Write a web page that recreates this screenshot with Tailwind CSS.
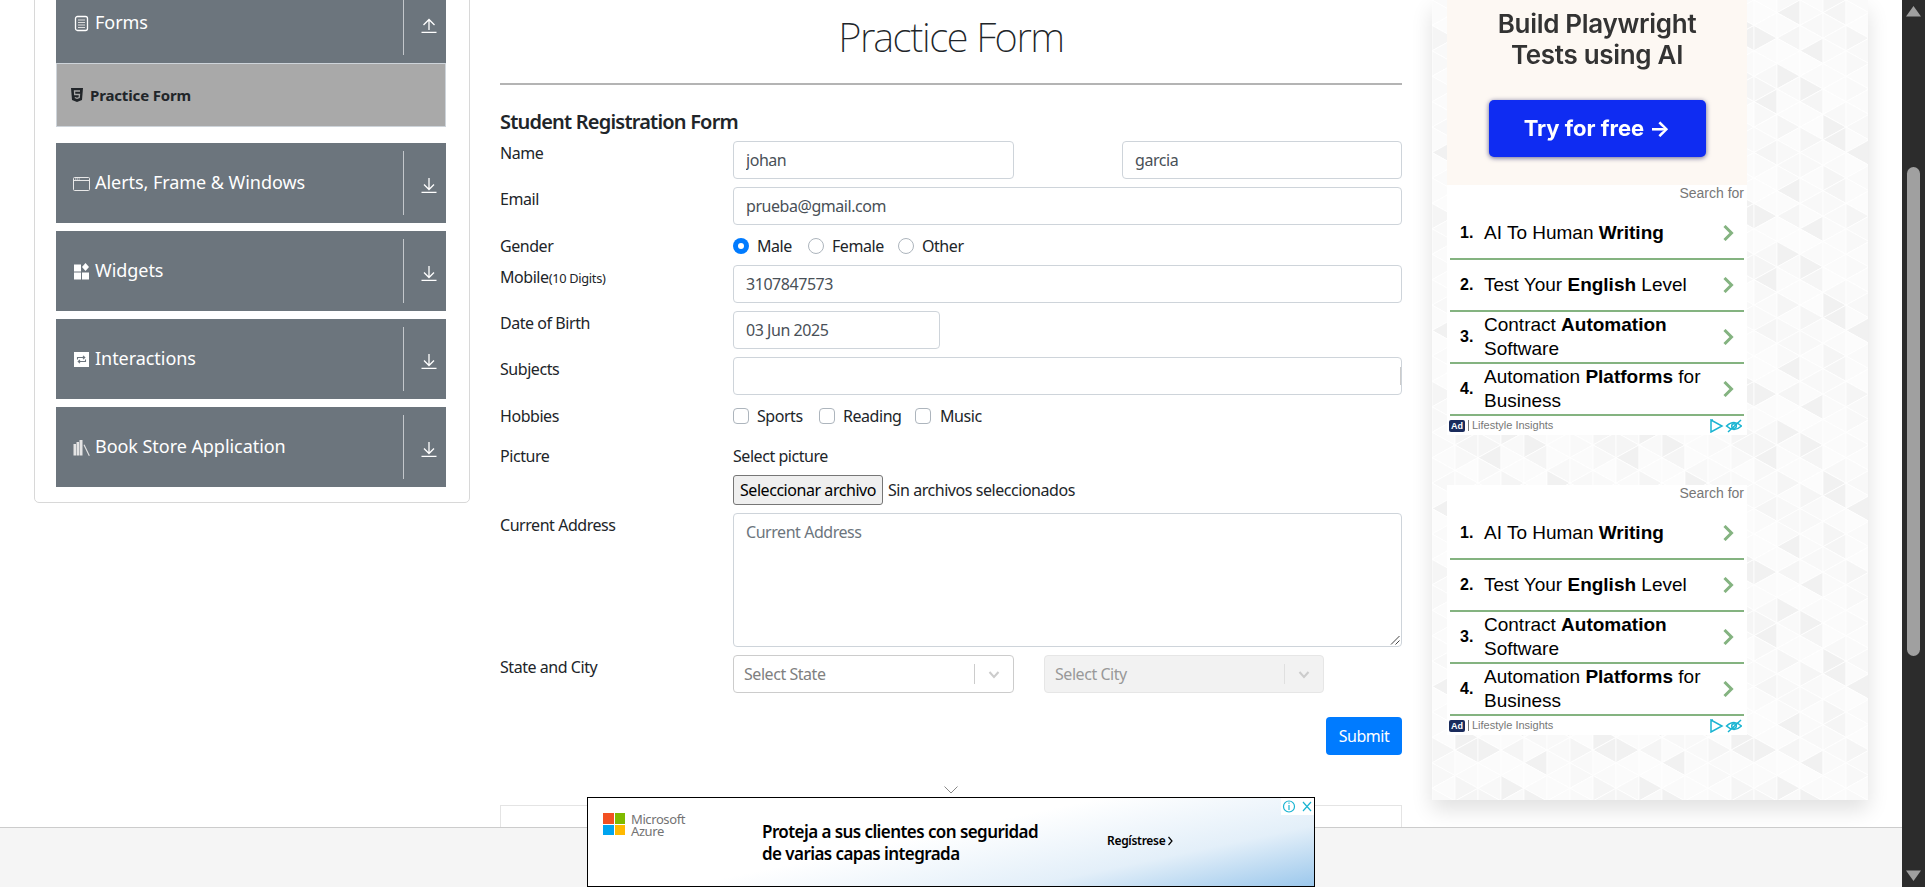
<!DOCTYPE html>
<html lang="en">
  <head>
    <meta charset="UTF-8" />
    <title>Practice Form</title>
    <script src="https://cdn.jsdelivr.net/npm/@tailwindcss/browser@4"></script>
  </head>
  <body class="bg-white">
    <div class="flex h-[887px] w-[1925px] overflow-hidden font-['Noto_Sans','Open_Sans',sans-serif] text-[16px] text-[#212529]">
      <div class="relative h-full w-[1902px] overflow-hidden">
        <div class="flex gap-[30px] pl-[34px]">
          <!-- sidebar -->
          <aside class="-mt-[30px] flex h-[533px] w-[436px] flex-col gap-2 rounded-[5px] border border-[#d8d8d8] pl-[21px] pr-[23px] pt-[12px]">
            <div class="-mb-2">
              <div class="flex h-20 items-center bg-[#6c757d] text-[18px] tracking-[-0.05px] text-white">
                <svg class="ml-[17px] mr-[5px] h-[17px] w-[17px]" viewBox="0 0 17 17" fill="none" stroke="#fff"><rect x="2.5" y="1.5" width="12" height="14" rx="2" stroke-width="1.3"/><path d="M5 5h7M5 7.5h7M5 10h7M5 12.5h7" stroke="#ddd"/></svg>
                <span class="flex-1 -translate-y-[1px]">Forms</span>
                <div class="flex h-16 w-[43px] items-center justify-center border-l border-[#c3c7cb]">
                  <svg class="ml-2 mt-1 h-4 w-4" viewBox="0 0 16 16" fill="none" stroke="#fff" stroke-width="1.3"><path d="M8 3v10M2.5 8 8 2.5 13.5 8M.5 15.3h15"/></svg>
                </div>
              </div>
              <div class="flex h-16 items-center border border-[#ced4da] bg-[#a9a9a9] pl-[14px] text-[15px] font-bold tracking-[-0.15px]">
                <svg class="mr-[7px] h-[14px] w-[12px]" viewBox="0 0 12 14"><path fill="#212529" d="M0 0h12l-1 12-5 2-5-2z"/><path fill="none" stroke="#a9a9a9" stroke-width="1.3" d="M9 3H3.5l.2 3.5H8.5l-.3 3L6 10.300l-2.200-.8"/></svg>
                <span>Practice Form</span>
              </div>
            </div>
            <div class="mt-4 flex h-20 items-center bg-[#6c757d] text-[18px] tracking-[-0.05px] text-white">
              <svg class="ml-[17px] mr-[5px] h-[17px] w-[17px]" viewBox="0 0 17 17" fill="none" stroke="#e8e8e8"><rect x=".5" y="2.500" width="16" height="13" rx="1"/><path d="M.5 5.500h16" /><path d="M2 4h5" stroke-width="1.200" stroke-dasharray="1.200 .6"/></svg>
              <span class="flex-1 -translate-y-[1px]">Alerts, Frame &amp; Windows</span>
              <div class="flex h-16 w-[43px] items-center justify-center border-l border-[#c3c7cb]">
                <svg class="ml-2 mt-1 h-4 w-4" viewBox="0 0 16 16" fill="none" stroke="#fff" stroke-width="1.3"><path d="M8 1v11M3 7.500 8 12.500 13 7.500M.5 15.300h15"/></svg>
              </div>
            </div>
            <div class="flex h-20 items-center bg-[#6c757d] text-[18px] tracking-[-0.05px] text-white">
              <svg class="ml-[17px] mr-[5px] h-[17px] w-[17px]" viewBox="0 0 17 17" fill="#fff"><rect x="1" y="1.500" width="7" height="7"/><rect x="1" y="9.500" width="7" height="7"/><rect x="9" y="9.500" width="7" height="7"/><path d="M12.500 0 16 4l-3.500 4L9 4z"/></svg>
              <span class="flex-1 -translate-y-[1px]">Widgets</span>
              <div class="flex h-16 w-[43px] items-center justify-center border-l border-[#c3c7cb]">
                <svg class="ml-2 mt-1 h-4 w-4" viewBox="0 0 16 16" fill="none" stroke="#fff" stroke-width="1.3"><path d="M8 1v11M3 7.500 8 12.500 13 7.500M.5 15.300h15"/></svg>
              </div>
            </div>
            <div class="flex h-20 items-center bg-[#6c757d] text-[18px] tracking-[-0.05px] text-white">
              <svg class="ml-[17px] mr-[5px] h-[17px] w-[17px]" viewBox="0 0 17 17"><rect x="1" y="1" width="15" height="15" fill="#fff"/><path fill="none" stroke="#6c757d" stroke-width="1.100" d="M4.500 8.500V6.500h7M10 4.800l1.800 1.700L10 8.200M12.500 8.500v2h-7M7 8.800l-1.800 1.700L7 12.200"/></svg>
              <span class="flex-1 -translate-y-[1px]">Interactions</span>
              <div class="flex h-16 w-[43px] items-center justify-center border-l border-[#c3c7cb]">
                <svg class="ml-2 mt-1 h-4 w-4" viewBox="0 0 16 16" fill="none" stroke="#fff" stroke-width="1.3"><path d="M8 1v11M3 7.500 8 12.500 13 7.500M.5 15.300h15"/></svg>
              </div>
            </div>
            <div class="flex h-20 items-center bg-[#6c757d] text-[18px] tracking-[-0.05px] text-white">
              <svg class="ml-[17px] mr-[5px] h-[17px] w-[17px]" viewBox="0 0 17 17" fill="#e4e4e4"><rect x=".5" y="5" width="2.500" height="11.500"/><rect x="3.500" y="3" width="2.500" height="13.500"/><rect x="6.500" y="1" width="3" height="15.500"/><path d="M10.500 6 11.500 5.600 16.800 16.500 15.800 17z"/></svg>
              <span class="flex-1 -translate-y-[1px]">Book Store Application</span>
              <div class="flex h-16 w-[43px] items-center justify-center border-l border-[#c3c7cb]">
                <svg class="ml-2 mt-1 h-4 w-4" viewBox="0 0 16 16" fill="none" stroke="#fff" stroke-width="1.3"><path d="M8 1v11M3 7.500 8 12.500 13 7.500M.5 15.300h15"/></svg>
              </div>
            </div>
          </aside>

          <!-- form -->
          <main class="w-[902px]">
            <h1 class="pt-[13px] text-center text-[40px] leading-[48px] font-extralight tracking-[-1.4px]">Practice Form</h1>
            <div class="mt-[22px] h-[2px] bg-[#b4b4b4]"></div>
            <h5 class="mt-[23px] text-[20px] leading-[28px] font-semibold tracking-[-0.8px]">Student Registration Form</h5>
            <form class="mt-[5px] tracking-[-0.45px]">
              <div class="flex">
                <label class="w-[233px] leading-6">Name</label>
                <div class="flex flex-1 justify-between">
                  <input class="h-[38px] w-[281px] rounded border border-[#ced4da] px-3 text-[#495057]" value="johan" />
                  <input class="h-[38px] w-[280px] rounded border border-[#ced4da] px-3 text-[#495057]" value="garcia" />
                </div>
              </div>
              <div class="mt-2 flex">
                <label class="w-[233px] leading-6">Email</label>
                <input class="h-[38px] flex-1 rounded border border-[#ced4da] px-3 text-[#495057]" value="prueba@gmail.com" />
              </div>
              <div class="mt-[9px] flex items-center leading-6">
                <label class="w-[233px]">Gender</label>
                <span class="box-border flex h-4 w-4 items-center justify-center rounded-full bg-[#007bff]"><span class="h-[6px] w-[6px] rounded-full bg-white"></span></span>
                <span class="ml-2 w-[51px]">Male</span>
                <span class="h-4 w-4 rounded-full border border-[#adb5bd]"></span>
                <span class="ml-2 w-[66px]">Female</span>
                <span class="h-4 w-4 rounded-full border border-[#adb5bd]"></span>
                <span class="ml-2">Other</span>
              </div>
              <div class="mt-[7px] flex">
                <label class="w-[233px] leading-6">Mobile<small class="text-[12.800px] tracking-[-0.3px]">(10 Digits)</small></label>
                <input class="h-[38px] flex-1 rounded border border-[#ced4da] px-3 text-[#495057]" value="3107847573" />
              </div>
              <div class="mt-2 flex">
                <label class="w-[233px] leading-6">Date of Birth</label>
                <input class="h-[38px] w-[207px] rounded border border-[#ced4da] px-3 text-[#495057]" value="03 Jun 2025" />
              </div>
              <div class="mt-2 flex">
                <label class="w-[233px] leading-6">Subjects</label>
                <div class="flex h-[38px] flex-1 items-center justify-end rounded border border-[#ced4da]"><span class="h-[18px] w-px bg-[#ccc]"></span></div>
              </div>
              <div class="mt-[9px] flex items-center leading-6">
                <label class="w-[233px]">Hobbies</label>
                <span class="h-4 w-4 rounded border border-[#adb5bd]"></span>
                <span class="ml-2 w-[62px]">Sports</span>
                <span class="h-4 w-4 rounded border border-[#adb5bd]"></span>
                <span class="ml-2 w-[72px]">Reading</span>
                <span class="h-4 w-4 rounded border border-[#adb5bd]"></span>
                <span class="ml-[9px]">Music</span>
              </div>
              <div class="mt-4 flex">
                <label class="w-[233px] leading-6">Picture</label>
                <div>
                  <div class="leading-6">Select picture</div>
                  <div class="mt-[7px] flex h-[30px] items-center">
                    <button type="button" class="h-[30px] w-[150px] rounded-[3px] border border-[#767676] bg-[#efefef] text-black">Seleccionar archivo</button>
                    <span class="ml-[5px]">Sin archivos seleccionados</span>
                  </div>
                </div>
              </div>
              <div class="mt-2 flex">
                <label class="w-[233px] leading-6">Current Address</label>
                <div class="relative flex-1">
                  <textarea class="block h-[134px] w-full resize-none rounded border border-[#ced4da] px-3 py-[6px] placeholder:text-[#6c757d]" placeholder="Current Address"></textarea>
                  <svg class="absolute bottom-[2px] right-[2px] h-[10px] w-[10px]" viewBox="0 0 10 10" fill="none" stroke="#444"><path d="M1 9.500 9.500 1M5.500 9.500 9.500 5.500"/></svg>
                </div>
              </div>
              <div class="mt-2 flex">
                <label class="w-[233px] leading-6">State and City</label>
                <div class="flex h-[38px] w-[281px] items-center rounded border border-[#ccc] pl-[10px] text-[#808080]">
                  <span class="flex-1">Select State</span>
                  <span class="h-5 w-px bg-[#ccc]"></span>
                  <svg class="mx-[10px] h-[18px] w-[18px]" viewBox="0 0 18 18" fill="none" stroke="#ccc" stroke-width="2"><path d="m4.500 7 4.500 5 4.500-5"/></svg>
                </div>
                <div class="ml-[30px] flex h-[38px] w-[280px] items-center rounded border border-[#e6e6e6] bg-[#f2f2f2] pl-[10px] text-[#999]">
                  <span class="flex-1">Select City</span>
                  <span class="h-5 w-px bg-[#e0e0e0]"></span>
                  <svg class="mx-[10px] h-[18px] w-[18px]" viewBox="0 0 18 18" fill="none" stroke="#ccc" stroke-width="2"><path d="m4.500 7 4.500 5 4.500-5"/></svg>
                </div>
              </div>
              <div class="mt-6 flex justify-end">
                <button type="button" class="h-[38px] w-[76px] rounded bg-[#007bff] text-white">Submit</button>
              </div>
            </form>
            <div class="mt-[31px] flex justify-center">
              <svg class="h-[8px] w-[14px]" viewBox="0 0 14 8" fill="none" stroke="#888"><path d="m.5.500 6.500 6.500 6.500-6.500"/></svg>
            </div>
            <div class="mt-[11px] h-[60px] border border-[#e4e4e4]"></div>
          </main>

          <!-- right ad column -->
          <section class="relative h-[800px] w-[436px] overflow-hidden bg-[#fafafa] shadow-[0_10px_20px_rgba(0,0,0,0.12)]">
            <svg id="pattern" class="absolute inset-0" width="436" height="800"></svg>
            <div class="relative ml-[15px] w-[300px] font-['Liberation_Sans',Arial,sans-serif]">
              <div class="flex h-[185px] flex-col items-center bg-[#fdf8f3] text-[#333] font-['Inter',sans-serif]">
                <p class="pt-[8px] text-center text-[26px] leading-[31px] font-semibold tracking-[-0.3px] blur-[0.5px]">Build Playwright<br />Tests using AI</p>
                <div class="mt-[30px] flex h-[57px] w-[217px] items-center justify-center rounded-[5px] bg-[#0f2cf2] text-[22px] font-bold text-white shadow-[0_1px_5px_rgba(0,0,80,0.6)] blur-[0.5px]">Try for free →</div>
              </div>
              <div class="bg-white">
                <div class="h-[23px] pr-[3px] text-right text-[14px] leading-[17px] text-[#777]">Search for</div>
                <div class="mx-[3px] flex h-[52px] items-center border-b-2 border-[#84b380] pl-[10px] pr-[10px] text-[19px] leading-6 text-black"><b class="w-[24px] shrink-0 text-[16px]">1.</b><span class="flex-1">AI To Human <b>Writing</b></span><svg class="h-[16px] w-[11px]" viewBox="0 0 11 16" fill="none" stroke="#84b380" stroke-width="3"><path d="m1.500 1 7 7-7 7"/></svg></div>
                <div class="mx-[3px] flex h-[52px] items-center border-b-2 border-[#84b380] pl-[10px] pr-[10px] text-[19px] leading-6 text-black"><b class="w-[24px] shrink-0 text-[16px]">2.</b><span class="flex-1">Test Your <b>English</b> Level</span><svg class="h-[16px] w-[11px]" viewBox="0 0 11 16" fill="none" stroke="#84b380" stroke-width="3"><path d="m1.500 1 7 7-7 7"/></svg></div>
                <div class="mx-[3px] flex h-[52px] items-center border-b-2 border-[#84b380] pl-[10px] pr-[10px] text-[19px] leading-6 text-black"><b class="w-[24px] shrink-0 text-[16px]">3.</b><span class="flex-1">Contract <b>Automation</b><br />Software</span><svg class="h-[16px] w-[11px]" viewBox="0 0 11 16" fill="none" stroke="#84b380" stroke-width="3"><path d="m1.500 1 7 7-7 7"/></svg></div>
                <div class="mx-[3px] flex h-[52px] items-center border-b-2 border-[#84b380] pl-[10px] pr-[10px] text-[19px] leading-6 text-black"><b class="w-[24px] shrink-0 text-[16px]">4.</b><span class="flex-1">Automation <b>Platforms</b> for<br />Business</span><svg class="h-[16px] w-[11px]" viewBox="0 0 11 16" fill="none" stroke="#84b380" stroke-width="3"><path d="m1.500 1 7 7-7 7"/></svg></div>
                <div class="flex h-[19px] items-center pl-[2px] pr-[5px] text-[11px] text-[#777]">
                  <span class="rounded-[2px] bg-[#1a2b5c] px-[2px] text-[9px] leading-[12px] font-bold text-white">Ad</span>
                  <span class="mx-[3px] h-[11px] w-px bg-[#777]"></span>
                  <span class="flex-1">Lifestyle Insights</span>
                  <svg class="h-[14px] w-[32px]" viewBox="0 0 32 14" fill="none" stroke="#19b4d2" stroke-width="1.500"><path d="M1 1v12l11-6zM1 1h2"/><path d="M16.500 7q7.500-7 15 0-7.500 7-15 0zM18 13 31 1"/><circle cx="24" cy="7" r="2.300"/></svg>
                </div>
              </div>
              <div class="mt-[50px] bg-white">
                <div class="h-[23px] pr-[3px] text-right text-[14px] leading-[17px] text-[#777]">Search for</div>
                <div class="mx-[3px] flex h-[52px] items-center border-b-2 border-[#84b380] pl-[10px] pr-[10px] text-[19px] leading-6 text-black"><b class="w-[24px] shrink-0 text-[16px]">1.</b><span class="flex-1">AI To Human <b>Writing</b></span><svg class="h-[16px] w-[11px]" viewBox="0 0 11 16" fill="none" stroke="#84b380" stroke-width="3"><path d="m1.500 1 7 7-7 7"/></svg></div>
                <div class="mx-[3px] flex h-[52px] items-center border-b-2 border-[#84b380] pl-[10px] pr-[10px] text-[19px] leading-6 text-black"><b class="w-[24px] shrink-0 text-[16px]">2.</b><span class="flex-1">Test Your <b>English</b> Level</span><svg class="h-[16px] w-[11px]" viewBox="0 0 11 16" fill="none" stroke="#84b380" stroke-width="3"><path d="m1.500 1 7 7-7 7"/></svg></div>
                <div class="mx-[3px] flex h-[52px] items-center border-b-2 border-[#84b380] pl-[10px] pr-[10px] text-[19px] leading-6 text-black"><b class="w-[24px] shrink-0 text-[16px]">3.</b><span class="flex-1">Contract <b>Automation</b><br />Software</span><svg class="h-[16px] w-[11px]" viewBox="0 0 11 16" fill="none" stroke="#84b380" stroke-width="3"><path d="m1.500 1 7 7-7 7"/></svg></div>
                <div class="mx-[3px] flex h-[52px] items-center border-b-2 border-[#84b380] pl-[10px] pr-[10px] text-[19px] leading-6 text-black"><b class="w-[24px] shrink-0 text-[16px]">4.</b><span class="flex-1">Automation <b>Platforms</b> for<br />Business</span><svg class="h-[16px] w-[11px]" viewBox="0 0 11 16" fill="none" stroke="#84b380" stroke-width="3"><path d="m1.500 1 7 7-7 7"/></svg></div>
                <div class="flex h-[19px] items-center pl-[2px] pr-[5px] text-[11px] text-[#777]">
                  <span class="rounded-[2px] bg-[#1a2b5c] px-[2px] text-[9px] leading-[12px] font-bold text-white">Ad</span>
                  <span class="mx-[3px] h-[11px] w-px bg-[#777]"></span>
                  <span class="flex-1">Lifestyle Insights</span>
                  <svg class="h-[14px] w-[32px]" viewBox="0 0 32 14" fill="none" stroke="#19b4d2" stroke-width="1.500"><path d="M1 1v12l11-6zM1 1h2"/><path d="M16.500 7q7.500-7 15 0-7.500 7-15 0zM18 13 31 1"/><circle cx="24" cy="7" r="2.300"/></svg>
                </div>
              </div>
            </div>
          </section>
        </div>

        <!-- sticky footer bar and anchor ad -->
        <footer class="absolute bottom-0 left-0 h-[60px] w-full border-t border-[#ccc] bg-[#f5f5f5]"></footer>
        <div class="absolute bottom-0 left-[587px] h-[90px] w-[728px] border border-black bg-[linear-gradient(168deg,#ffffff_45%,#e3eff9_75%,#9cc8ec_100%)]">
          <div class="absolute left-[15px] top-[15px] grid h-[22px] w-[22px] grid-cols-2 gap-[1px]">
            <span class="bg-[#f25022]"></span><span class="bg-[#7fba00]"></span><span class="bg-[#00a4ef]"></span><span class="bg-[#ffb900]"></span>
          </div>
          <div class="absolute left-[43px] top-[15px] text-[13px] leading-[12px] tracking-[-0.4px] text-[#737373]">Microsoft<br />Azure</div>
          <div class="absolute left-[174px] top-[23px] text-[17px] leading-[22px] font-semibold tracking-[-0.57px] text-black">Proteja a sus clientes con seguridad<br />de varias capas integrada</div>
          <div class="absolute left-[519px] top-[34px] flex items-center gap-[3px] text-[12px] font-semibold tracking-[-0.3px] text-black">Regístrese<svg class="h-[10px] w-[5px]" viewBox="0 0 5 10" fill="none" stroke="#000" stroke-width="1.200"><path d="m.5 1 3.500 4-3.500 4"/></svg></div>
          <svg class="absolute right-0 top-0 h-[17px] w-[33px] bg-white" viewBox="0 0 33 17" fill="none" stroke="#19b4d2" stroke-width="1.200"><circle cx="8" cy="8.500" r="5.500"/><path d="M8 7v5M8 4.500v1.300M22 4l8 9M30 4l-8 9"/></svg>
        </div>
      </div>

      <!-- browser scrollbar -->
      <div class="relative h-full w-[23px] bg-[#2c2c2c]">
        <svg class="absolute left-[4px] top-[6px] h-[11px] w-[15px]" viewBox="0 0 15 11"><path fill="#a0a0a0" d="M7.500 0 15 10.500H0z"/></svg>
        <div class="absolute left-[5px] top-[167px] h-[489px] w-[13px] rounded-full bg-[#a0a0a0]"></div>
        <svg class="absolute bottom-[6px] left-[4px] h-[11px] w-[15px]" viewBox="0 0 15 11"><path fill="#a0a0a0" d="M0 .500h15L7.500 11z"/></svg>
      </div>
    </div>
    <script>
      // triangle wallpaper behind the ads, repeats every 6 columns and 7 rows
      const svg = document.getElementById("pattern");
      const cw = 23;
      const s = 178 / 7;
      const shades = ["#fbfbfb", "#f9f9f9", "#fcfcfc", "#f5f5f5", "#fafafa", "#f1f1f1", "#f8f8f8", "#fbfbfb"];
      let out = "";
      for (let c = 0; c < 20; c++) {
        for (let i = -1; i < 33; i++) {
          const x = c * cw;
          const y = i * s + (c % 2 ? s / 2 : 0);
          const a = shades[((c % 6) * 5 + ((i + 7) % 7) * 3) % 8];
          const b = shades[((c % 6) * 3 + ((i + 7) % 7) * 7 + 2) % 8];
          out += `<polygon points="${x},${y} ${x},${y + s} ${x + cw},${y + s / 2}" fill="${a}" stroke="#fff" stroke-width="0.8"/>`;
          out += `<polygon points="${x},${y + s} ${x + cw},${y + s / 2} ${x + cw},${y + s * 1.5}" fill="${b}" stroke="#fff" stroke-width="0.8"/>`;
        }
      }
      svg.innerHTML = out;
    </script>
  </body>
</html>
